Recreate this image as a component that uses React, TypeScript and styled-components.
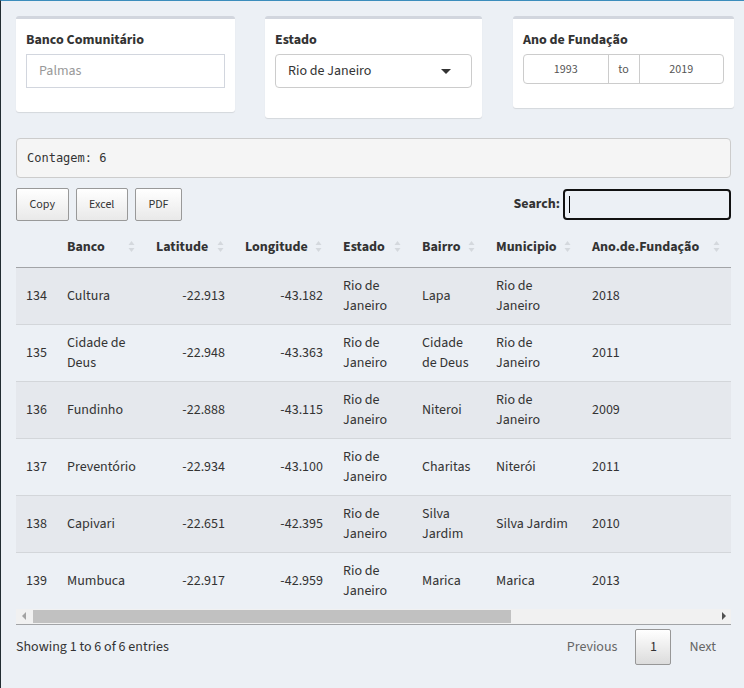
import React from "react";
import styled, { createGlobalStyle } from "styled-components";

const GlobalStyle = createGlobalStyle`
  html, body { margin: 0; padding: 0; background: #ecf0f5; overflow: hidden; }
  body { font-family: "Source Sans Pro", "Source Sans 3", Lato, "Noto Sans", sans-serif; color: #333; font-size: 14px; }
  * { box-sizing: border-box; }
`;

const Page = styled.div`
  min-height: 688px;
  border-top: 1px solid #3c8dbc;
  border-left: 1px solid #222d32;
  background: #ecf0f5;
  padding: 15px 13px 0 15px;
`;

const FilterRow = styled.div`
  display: grid;
  grid-template-columns: 219px 217px 222px;
  column-gap: 30px;
  align-items: start;
  margin-bottom: 20px;
  & > :last-child { margin-left: 1px; }
`;

const Box = styled.div<{ $bottom: number }>`
  background: #fff;
  border-top: 3px solid #d2d6de;
  border-radius: 3px;
  box-shadow: 0 1px 1px rgba(0, 0, 0, 0.1);
  padding: 11px 10px ${(p) => p.$bottom}px 10px;
`;

const Label = styled.div`
  font-weight: 700;
  font-size: 14px;
  line-height: 20px;
  margin-bottom: 4px;
`;

const TextInput = styled.div`
  height: 34px;
  border: 1px solid #d2d6de;
  padding: 0 12px;
  display: flex;
  align-items: center;
  font-size: 14px;
  color: #999;
`;

const SelectBox = styled.div`
  height: 34px;
  border: 1px solid #ccc;
  border-radius: 4px;
  padding: 0 12px;
  display: flex;
  align-items: center;
  justify-content: space-between;
  font-size: 14px;
  color: #333;
`;

const Caret = styled.span`
  width: 0;
  height: 0;
  border-left: 5px solid transparent;
  border-right: 5px solid transparent;
  border-top: 5px solid #333;
  margin-right: 8px;
`;

const RangeGroup = styled.div`
  height: 30px;
  border: 1px solid #ccc;
  border-radius: 4px;
  display: grid;
  grid-template-columns: 1fr 32px 1fr;
  font-size: 12px;
  color: #555;
`;

const RangeCell = styled.div<{ $divider?: boolean }>`
  display: flex;
  align-items: center;
  justify-content: center;
  border-left: ${(p) => (p.$divider ? "1px solid #ccc" : "none")};
  border-right: ${(p) => (p.$divider ? "1px solid #ccc" : "none")};
`;

const Verbatim = styled.pre`
  margin: 0 0 10px 0;
  padding: 9.5px 10px;
  font-family: "DejaVu Sans Mono", "Liberation Mono", monospace;
  font-size: 12px;
  line-height: 18.5px;
  background: #f5f5f5;
  border: 1px solid #ccc;
  border-radius: 4px;
  color: #333;
`;

const ToolBar = styled.div`
  display: flex;
  justify-content: space-between;
  align-items: flex-start;
  margin-bottom: 8px;
`;

const ButtonGroup = styled.div`
  display: flex;
  gap: 7px;
`;

const ExportButton = styled.button`
  height: 33px;
  padding: 0 12.5px;
  font-family: inherit;
  font-size: 12px;
  color: #333;
  border: 1px solid #999;
  border-radius: 2px;
  background: linear-gradient(to bottom, #fff 0%, #e9e9e9 100%);
`;

const SearchLabel = styled.label`
  display: flex;
  align-items: center;
  font-weight: 700;
  font-size: 14px;
  gap: 3px;
  padding-top: 1px;
`;

const SearchBox = styled.div`
  width: 168px;
  height: 31px;
  border: 2px solid #111;
  border-radius: 4px;
  display: flex;
  align-items: center;
  padding-left: 4px;
`;

const TextCaret = styled.span`
  width: 1px;
  height: 17px;
  background: #000;
`;

const TableClip = styled.div`
  overflow: hidden;
`;

const Table = styled.table`
  border-collapse: collapse;
  table-layout: fixed;
  width: 715px;
`;

const HeadCell = styled.th`
  padding: 8px 11px 10px 10px;
  font-weight: 700;
  font-size: 14px;
  line-height: 20px;
  text-align: left;
  border-bottom: 1px solid #a2a4a7;
  white-space: nowrap;
`;

const HeadInner = styled.div`
  display: flex;
  align-items: center;
  justify-content: space-between;
`;

const Row = styled.tr<{ $striped: boolean }>`
  background: ${(p) => (p.$striped ? "#e5e8ed" : "transparent")};
  & td { border-top: 1px solid #d3d6da; }
`;

const Cell = styled.td<{ $right?: boolean }>`
  padding: 8px 10px;
  font-size: 14px;
  line-height: 20px;
  vertical-align: middle;
  text-align: ${(p) => (p.$right ? "right" : "left")};
  white-space: nowrap;
  color: #333;
`;

const ScrollTrack = styled.div`
  height: 15px;
  background: #f1f1f1;
  display: flex;
  align-items: center;
  border-bottom: 1px solid #a2a4a7;
  box-sizing: content-box;
`;

const ArrowLeft = styled.span`
  width: 0;
  height: 0;
  margin: 0 6px 0 6px;
  border-top: 4px solid transparent;
  border-bottom: 4px solid transparent;
  border-right: 4px solid #a3a3a3;
`;

const ArrowRight = styled.span`
  width: 0;
  height: 0;
  margin: 0 5px 0 auto;
  border-top: 4px solid transparent;
  border-bottom: 4px solid transparent;
  border-left: 4px solid #505050;
`;

const Thumb = styled.div`
  width: 478px;
  height: 13px;
  margin-left: 1px;
  background: #c1c1c1;
`;

const Footer = styled.div`
  display: flex;
  justify-content: space-between;
  align-items: center;
  padding-top: 4px;
`;

const Info = styled.div`
  font-size: 14px;
  color: #333;
`;

const Pager = styled.div`
  display: flex;
  gap: 2px;
  margin-right: -1px;
`;

const PageButton = styled.span<{ $current?: boolean }>`
  padding: 7px ${(p) => (p.$current ? 0 : 15)}px;
  width: ${(p) => (p.$current ? "36px" : "auto")};
  text-align: center;
  font-size: 14px;
  line-height: 20px;
  color: ${(p) => (p.$current ? "#333" : "#666")};
  border: 1px solid ${(p) => (p.$current ? "#979797" : "transparent")};
  border-radius: 2px;
  background: ${(p) =>
    p.$current ? "linear-gradient(to bottom, #fff 0%, #dcdcdc 100%)" : "transparent"};
`;

const SortIcon = () => (
  <svg width="7" height="13" viewBox="0 0 7 13">
    <path d="M3.5 1 L6.5 5 H0.5Z" fill="#d4d8dd" />
    <path d="M0.5 8 H6.5 L3.5 12Z" fill="#d4d8dd" />
  </svg>
);

const columns: { label: string; width: number }[] = [
  { label: "", width: 41 },
  { label: "Banco", width: 89 },
  { label: "Latitude", width: 89 },
  { label: "Longitude", width: 98 },
  { label: "Estado", width: 79 },
  { label: "Bairro", width: 74 },
  { label: "Municipio", width: 96 },
  { label: "Ano.de.Fundação", width: 149 },
];

type RowData = {
  id: string;
  banco: string[];
  lat: string;
  lon: string;
  estado: string[];
  bairro: string[];
  municipio: string[];
  ano: string;
};

const RJ = ["Rio de", "Janeiro"];

const rows: RowData[] = [
  { id: "134", banco: ["Cultura"], lat: "-22.913", lon: "-43.182", estado: RJ, bairro: ["Lapa"], municipio: RJ, ano: "2018" },
  { id: "135", banco: ["Cidade de", "Deus"], lat: "-22.948", lon: "-43.363", estado: RJ, bairro: ["Cidade", "de Deus"], municipio: RJ, ano: "2011" },
  { id: "136", banco: ["Fundinho"], lat: "-22.888", lon: "-43.115", estado: RJ, bairro: ["Niteroi"], municipio: RJ, ano: "2009" },
  { id: "137", banco: ["Preventório"], lat: "-22.934", lon: "-43.100", estado: RJ, bairro: ["Charitas"], municipio: ["Niterói"], ano: "2011" },
  { id: "138", banco: ["Capivari"], lat: "-22.651", lon: "-42.395", estado: RJ, bairro: ["Silva", "Jardim"], municipio: ["Silva Jardim"], ano: "2010" },
  { id: "139", banco: ["Mumbuca"], lat: "-22.917", lon: "-42.959", estado: RJ, bairro: ["Marica"], municipio: ["Marica"], ano: "2013" },
];

const Lines = ({ lines }: { lines: string[] }) => (
  <>
    {lines.map((l, i) => (
      <React.Fragment key={i}>
        {i > 0 && <br />}
        {l}
      </React.Fragment>
    ))}
  </>
);

export default function App() {
  return (
    <>
      <GlobalStyle />
      <Page>
        <FilterRow>
          <Box $bottom={24}>
            <Label>Banco Comunitário</Label>
            <TextInput>Palmas</TextInput>
          </Box>
          <Box $bottom={30}>
            <Label>Estado</Label>
            <SelectBox>
              <span>Rio de Janeiro</span>
              <Caret />
            </SelectBox>
          </Box>
          <Box $bottom={24}>
            <Label>Ano de Fundação</Label>
            <RangeGroup>
              <RangeCell>1993</RangeCell>
              <RangeCell $divider>to</RangeCell>
              <RangeCell>2019</RangeCell>
            </RangeGroup>
          </Box>
        </FilterRow>

        <Verbatim>Contagem: 6</Verbatim>

        <ToolBar>
          <ButtonGroup>
            <ExportButton>Copy</ExportButton>
            <ExportButton>Excel</ExportButton>
            <ExportButton>PDF</ExportButton>
          </ButtonGroup>
          <SearchLabel>
            Search:
            <SearchBox>
              <TextCaret />
            </SearchBox>
          </SearchLabel>
        </ToolBar>

        <TableClip>
          <Table>
            <colgroup>
              {columns.map((c, i) => (
                <col key={i} style={{ width: c.width }} />
              ))}
            </colgroup>
            <thead>
              <tr>
                {columns.map((c, i) => (
                  <HeadCell key={i}>
                    {c.label && (
                      <HeadInner>
                        <span>{c.label}</span>
                        <SortIcon />
                      </HeadInner>
                    )}
                  </HeadCell>
                ))}
              </tr>
            </thead>
            <tbody>
              {rows.map((r, i) => (
                <Row key={r.id} $striped={i % 2 === 0}>
                  <Cell>{r.id}</Cell>
                  <Cell><Lines lines={r.banco} /></Cell>
                  <Cell $right>{r.lat}</Cell>
                  <Cell $right>{r.lon}</Cell>
                  <Cell><Lines lines={r.estado} /></Cell>
                  <Cell><Lines lines={r.bairro} /></Cell>
                  <Cell><Lines lines={r.municipio} /></Cell>
                  <Cell>{r.ano}</Cell>
                </Row>
              ))}
            </tbody>
          </Table>
        </TableClip>
        <ScrollTrack>
          <ArrowLeft />
          <Thumb />
          <ArrowRight />
        </ScrollTrack>

        <Footer>
          <Info>Showing 1 to 6 of 6 entries</Info>
          <Pager>
            <PageButton>Previous</PageButton>
            <PageButton $current>1</PageButton>
            <PageButton>Next</PageButton>
          </Pager>
        </Footer>
      </Page>
    </>
  );
}
